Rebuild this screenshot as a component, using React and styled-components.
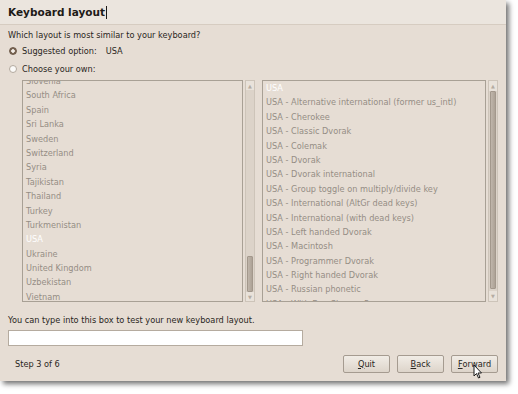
import React from "react";
import styled, { createGlobalStyle } from "styled-components";

const GlobalStyle = createGlobalStyle`
  html, body {
    margin: 0;
    padding: 0;
    background: #ffffff;
  }
  body {
    font-family: "DejaVu Sans", "Liberation Sans", sans-serif;
  }
`;

const Page = styled.div`
  width: 518px;
  height: 394px;
  overflow: hidden;
  position: relative;
`;

const Window = styled.div`
  width: 506px;
  height: 381px;
  background: #e6ddd4;
  box-shadow: 3px 3px 5px rgba(0, 0, 0, 0.55);
  display: flex;
  flex-direction: column;
  color: #2a2622;
  font-size: 8.2px;
`;

const Header = styled.div`
  height: 24px;
  padding: 0 8px;
  display: flex;
  align-items: center;
  background: #ebe5de;
  border-bottom: 1px solid #d6ccc1;
`;

const Title = styled.h1`
  margin: 0;
  font-size: 10.5px;
  font-weight: bold;
  color: #1d1a17;
  display: flex;
  align-items: center;
`;

const Caret = styled.span`
  display: inline-block;
  width: 1px;
  height: 13px;
  margin-left: 1px;
  background: #1d1a17;
`;

const Body = styled.div`
  flex: 1;
  padding: 3px 8px 0;
  display: flex;
  flex-direction: column;
`;

const Question = styled.div`
  height: 14px;
  line-height: 14px;
`;

const RadioRow = styled.div`
  height: 18px;
  display: flex;
  align-items: center;
  gap: 5px;
  padding-left: 1px;
`;

const RadioDot = styled.span`
  width: 8px;
  height: 8px;
  border-radius: 50%;
  box-sizing: border-box;
  border: 1px solid ${(p) => (p.$on ? "#6b5847" : "#b3a99e")};
  background: ${(p) =>
    p.$on ? "radial-gradient(circle, #f2ede7 0 1.5px, #7a6654 2px)" : "#fbfaf8"};
`;

const Value = styled.span`
  margin-left: 4px;
`;

const Lists = styled.div`
  margin-top: 2px;
  margin-left: 14px;
  display: flex;
  gap: 7px;
`;

const ListBox = styled.div`
  display: flex;
  gap: 2px;
  width: ${(p) => p.$w}px;
`;

const Rows = styled.div`
  flex: 1;
  height: 222px;
  box-sizing: border-box;
  border: 1px solid #a8a095;
  overflow: hidden;
`;

const RowStack = styled.div`
  margin-top: ${(p) => p.$offset}px;
`;

const Row = styled.div`
  height: 14.4px;
  line-height: 14.4px;
  padding-left: 3px;
  white-space: nowrap;
  color: ${(p) => (p.$selected ? "#ffffff" : "#958d85")};
`;

const Scrollbar = styled.div`
  width: 10px;
  height: 222px;
  box-sizing: border-box;
  border: 1px solid #cdc4b9;
  background: #dcd3c9;
  display: flex;
  flex-direction: column;
`;

const Arrow = styled.div`
  height: 10px;
  display: flex;
  align-items: center;
  justify-content: center;
  color: #b5aca2;
  font-size: 5px;
  background: #e9e2da;
`;

const Track = styled.div`
  flex: 1;
  display: flex;
  flex-direction: column;
  padding-top: ${(p) => p.$top}px;
`;

const Thumb = styled.div`
  height: ${(p) => p.$h}px;
  margin: 0 1px;
  border-radius: 1px;
  background: linear-gradient(to right, #c0b6ab, #ada296);
  border: 1px solid #a3988c;
`;

const Hint = styled.div`
  margin-top: 12px;
  height: 12px;
  line-height: 12px;
`;

const TestInput = styled.input`
  margin-top: 4px;
  width: 295px;
  height: 16px;
  box-sizing: border-box;
  border: 1px solid #b5ab9f;
  background: #ffffff;
  outline: none;
`;

const Footer = styled.div`
  height: 35px;
  padding: 0 8px 0 15px;
  display: flex;
  align-items: center;
`;

const Step = styled.div`
  flex: 1;
`;

const Buttons = styled.div`
  display: flex;
  gap: 7px;
`;

const Button = styled.button`
  width: 47px;
  height: 18px;
  padding: 0;
  font: inherit;
  color: #2a2622;
  border: 1px solid #a59b90;
  border-radius: 2px;
  background: linear-gradient(#f1ece6, #ddd4ca);
  display: flex;
  align-items: center;
  justify-content: center;
  u {
    text-decoration: underline;
  }
`;

const Pointer = styled.svg`
  position: absolute;
  left: 473px;
  top: 364px;
`;

const countries = [
  "Slovenia",
  "South Africa",
  "Spain",
  "Sri Lanka",
  "Sweden",
  "Switzerland",
  "Syria",
  "Tajikistan",
  "Thailand",
  "Turkey",
  "Turkmenistan",
  "USA",
  "Ukraine",
  "United Kingdom",
  "Uzbekistan",
  "Vietnam",
];

const variants = [
  "USA",
  "USA - Alternative international (former us_intl)",
  "USA - Cherokee",
  "USA - Classic Dvorak",
  "USA - Colemak",
  "USA - Dvorak",
  "USA - Dvorak international",
  "USA - Group toggle on multiply/divide key",
  "USA - International (AltGr dead keys)",
  "USA - International (with dead keys)",
  "USA - Left handed Dvorak",
  "USA - Macintosh",
  "USA - Programmer Dvorak",
  "USA - Right handed Dvorak",
  "USA - Russian phonetic",
  "USA - With EuroSign on 5",
];

function List({ items, selected, width, offset, thumbTop, thumbH }) {
  return (
    <ListBox $w={width}>
      <Rows>
        <RowStack $offset={offset}>
          {items.map((it) => (
            <Row key={it} $selected={it === selected}>
              {it}
            </Row>
          ))}
        </RowStack>
      </Rows>
      <Scrollbar>
        <Arrow>▲</Arrow>
        <Track $top={thumbTop}>
          <Thumb $h={thumbH} />
        </Track>
        <Arrow>▼</Arrow>
      </Scrollbar>
    </ListBox>
  );
}

export default function App() {
  return (
    <>
      <GlobalStyle />
      <Page>
        <Window>
          <Header>
            <Title>
              Keyboard layout
              <Caret />
            </Title>
          </Header>
          <Body>
            <Question>Which layout is most similar to your keyboard?</Question>
            <RadioRow>
              <RadioDot $on />
              <span>Suggested option:</span>
              <Value>USA</Value>
            </RadioRow>
            <RadioRow>
              <RadioDot />
              <span>Choose your own:</span>
            </RadioRow>
            <Lists>
              <List
                items={countries}
                selected="USA"
                width={234}
                offset={-7}
                thumbTop={166}
                thumbH={34}
              />
              <List
                items={variants}
                selected="USA"
                width={237}
                offset={0}
                thumbTop={0}
                thumbH={196}
              />
            </Lists>
            <Hint>You can type into this box to test your new keyboard layout.</Hint>
            <TestInput />
          </Body>
          <Footer>
            <Step>Step 3 of 6</Step>
            <Buttons>
              <Button>
                <u>Q</u>uit
              </Button>
              <Button>
                <u>B</u>ack
              </Button>
              <Button>
                <u>F</u>orward
              </Button>
            </Buttons>
          </Footer>
        </Window>
        <Pointer width="10" height="15" viewBox="0 0 10 15">
          <path
            d="M1 1 L1 12 L3.5 9.5 L5.5 14 L7 13.3 L5 9 L8.5 9 Z"
            fill="#ffffff"
            stroke="#1a1a1a"
            strokeWidth="1"
            strokeLinejoin="round"
          />
        </Pointer>
      </Page>
    </>
  );
}
